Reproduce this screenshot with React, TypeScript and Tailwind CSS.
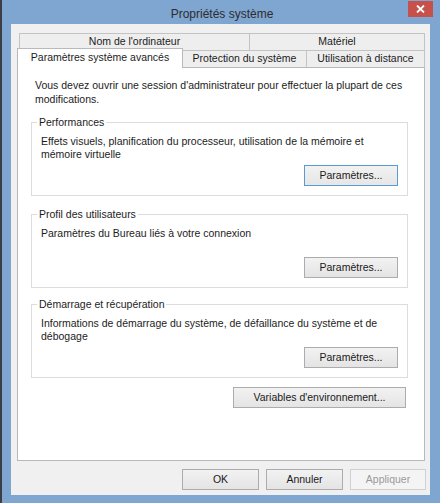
import React from "react";

function Btn({
  children,
  className = "",
  variant = "normal",
}: {
  children: React.ReactNode;
  className?: string;
  variant?: "normal" | "default" | "disabled";
}) {
  const base =
    "h-[21px] flex items-center justify-center text-[10.5px] leading-none border shrink-0";
  const v =
    variant === "default"
      ? "border-[#5a9ad6] bg-linear-to-b from-[#f2f2f2] to-[#e6e6e6] text-[#1a1a1a]"
      : variant === "disabled"
      ? "border-[#d0d0d0] bg-[#f4f4f4] text-[#9a9a9a]"
      : "border-[#acacac] bg-linear-to-b from-[#f2f2f2] to-[#e4e4e4] text-[#1a1a1a]";
  return <div className={`${base} ${v} ${className}`}>{children}</div>;
}

function Group({
  title,
  children,
  className = "",
  defaultBtn = false,
}: {
  title: string;
  children: React.ReactNode;
  className?: string;
  defaultBtn?: boolean;
}) {
  return (
    <div
      className={`relative w-[377px] h-[74px] border border-[#dcdcdc] flex flex-col justify-between pt-[12px] pl-[9px] pr-[9px] pb-[9px] ${className}`}
    >
      <div className="absolute left-[5px] top-[-7px] bg-white px-[2px] text-[10.5px] leading-[13px] whitespace-nowrap">
        {title}
      </div>
      <div className="text-[10.5px] leading-[12.5px] whitespace-nowrap">{children}</div>
      <div className="flex justify-end">
        <Btn className="w-[94px]" variant={defaultBtn ? "default" : "normal"}>
          Paramètres...
        </Btn>
      </div>
    </div>
  );
}

export default function App() {
  return (
    <div className="w-[440px] h-[503px] flex bg-[#7fa5d1] font-['Liberation_Sans',Arial,sans-serif] text-[#1c1c1c] overflow-hidden">
      <div className="w-[2px] bg-[#3c3e46] shrink-0" />
      <div className="flex-1 flex flex-col pl-[9px] pr-[10px] pb-[8px]">
        <div className="h-[24px] relative flex items-center justify-center shrink-0">
          <span className="text-[12px] text-[#2d2d2d] ml-[3px] mt-[4px]">Propriétés système</span>
          <div className="absolute right-[-3px] top-[1px] w-[25px] h-[16px] bg-[#c7504a] flex items-center justify-center">
            <svg width="9" height="8" viewBox="0 0 9 8">
              <path d="M1 0.5 L8 7.5 M8 0.5 L1 7.5" stroke="white" strokeWidth="1.8" />
            </svg>
          </div>
        </div>
        <div className="flex-1 bg-[#f0f0f0] flex flex-col pl-[6px] pt-[9px]">
          {/* tab row 1 */}
          <div className="flex h-[17px] pl-[2px] text-[10.5px]">
            <div className="w-[231px] border-l border-t border-r border-[#c3c3c3] bg-[#eeeeee] flex items-center justify-center pb-[1px]">
              Nom de l'ordinateur
            </div>
            <div className="w-[175px] border-t border-r border-[#c3c3c3] bg-[#eeeeee] flex items-center justify-center pb-[1px]">
              Matériel
            </div>
          </div>
          {/* tab row 2 */}
          <div className="flex h-[17px] items-end text-[10.5px]">
            <div className="relative z-10 w-[166px] h-[20px] -mb-px border-l border-t border-r border-[#b9b9b9] bg-white flex items-center justify-center pb-[2px]">
              Paramètres système avancés
            </div>
            <div className="w-[124px] h-[17px] border-t border-r border-[#c3c3c3] bg-[#eeeeee] flex items-center justify-center">
              Protection du système
            </div>
            <div className="w-[118px] h-[17px] border-t border-r border-[#c3c3c3] bg-[#eeeeee] flex items-center justify-center">
              Utilisation à distance
            </div>
          </div>
          {/* panel */}
          <div className="w-[408px] h-[394px] border border-[#b9b9b9] bg-white flex flex-col pt-[10px] pl-[13px] shrink-0">
            <div className="ml-[4px] text-[10.5px] leading-[14px] whitespace-nowrap">
              Vous devez ouvrir une session d'administrateur pour effectuer la plupart de ces
              <br />
              modifications.
            </div>
            <Group title="Performances" className="mt-[16px]" defaultBtn>
              Effets visuels, planification du processeur, utilisation de la mémoire et
              <br />
              mémoire virtuelle
            </Group>
            <Group title="Profil des utilisateurs" className="mt-[18px]">
              Paramètres du Bureau liés à votre connexion
            </Group>
            <Group title="Démarrage et récupération" className="mt-[16px]">
              Informations de démarrage du système, de défaillance du système et de
              <br />
              débogage
            </Group>
            <div className="w-[377px] flex justify-end mt-[9px]">
              <Btn className="w-[173px] mr-[2px]">Variables d'environnement...</Btn>
            </div>
          </div>
          {/* bottom buttons */}
          <div className="flex justify-end gap-[7px] pr-[4px] mt-[8px]">
            <Btn className="w-[77px]">OK</Btn>
            <Btn className="w-[77px]">Annuler</Btn>
            <Btn className="w-[76px]" variant="disabled">
              Appliquer
            </Btn>
          </div>
        </div>
      </div>
    </div>
  );
}
